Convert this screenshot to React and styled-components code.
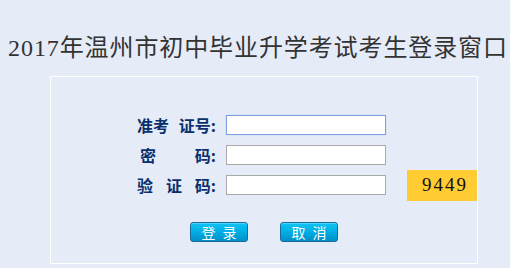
import React from "react";
import styled, { createGlobalStyle } from "styled-components";

const Global = createGlobalStyle`
  html, body { margin: 0; padding: 0; background: #e5ebf7; }
  body { width: 510px; height: 268px; overflow: hidden; }
`;

const Page = styled.div`
  width: 510px;
  height: 268px;
  background: #e5ebf7;
  display: flex;
  flex-direction: column;
`;

const Title = styled.h1`
  margin: 33px 0 0 0;
  padding-left: 6px;
  height: 30px;
  line-height: 30px;
  text-align: center;
  font-family: "Liberation Serif", "Noto Sans CJK SC", serif;
  font-weight: 400;
  font-size: 24px;
  letter-spacing: 0.9px;
  color: #333333;
  white-space: nowrap;
`;

const Panel = styled.div`
  margin: 13px 0 0 50px;
  width: 428px;
  height: 188px;
  border: 1px solid #ffffff;
  box-sizing: border-box;
  display: flex;
  flex-direction: column;
  padding-top: 38px;
`;

const Rows = styled.div`
  display: flex;
  flex-direction: column;
  gap: 10px;
  padding-left: 86px;
`;

const Row = styled.div`
  display: flex;
  align-items: center;
  height: 20px;
`;

const Label = styled.div`
  width: 79px;
  margin-right: 10px;
  display: flex;
  justify-content: space-between;
  padding-left: ${(p) => p.$indent || 0}px;
  box-sizing: border-box;
  font-family: "Noto Sans CJK SC", sans-serif;
  font-weight: 700;
  font-size: 16px;
  line-height: 20px;
  color: #0b2f6b;
  white-space: nowrap;
`;

const Field = styled.input`
  width: 160px;
  height: 20px;
  box-sizing: border-box;
  margin: 0;
  padding: 0 3px;
  background: #ffffff;
  border: 1px solid ${(p) => (p.$active ? "#7b9fe2" : "#a9a9a9")};
  box-shadow: ${(p) => (p.$active ? "0 0 1px 0 #a9c3f0" : "none")};
  outline: none;
  font-size: 13px;
`;

const Captcha = styled.div`
  margin-left: 21px;
  width: 70px;
  height: 31px;
  flex-shrink: 0;
  background: #ffcc33;
  display: flex;
  align-items: center;
  padding-left: 15px;
  box-sizing: border-box;
  font-family: "Liberation Serif", serif;
  font-size: 19px;
  letter-spacing: 2px;
  color: #111111;
`;

const Buttons = styled.div`
  display: flex;
  gap: 32px;
  margin-top: 27px;
  padding-left: 139px;
`;

const Button = styled.button`
  width: 58px;
  height: 20px;
  margin: 0;
  padding: 0;
  box-sizing: border-box;
  border: 1px solid #1a6a9c;
  border-radius: 3px;
  background: linear-gradient(to bottom, #12c4f4 0%, #00b0e6 45%, #0090c8 100%);
  box-shadow: inset 0 1px 0 rgba(255, 255, 255, 0.25);
  color: #ffffff;
  font-family: "Noto Sans CJK SC", sans-serif;
  font-size: 14px;
  line-height: 18px;
  letter-spacing: 2px;
  text-indent: 2px;
  cursor: pointer;
`;

export default function App() {
  return (
    <Page>
      <Global />
      <Title>2017年温州市初中毕业升学考试考生登录窗口</Title>
      <Panel>
        <Rows>
          <Row>
            <Label>
              <span>准考</span>
              <span>证号:</span>
            </Label>
            <Field $active type="text" />
          </Row>
          <Row>
            <Label $indent={3}>
              <span>密</span>
              <span>码:</span>
            </Label>
            <Field type="password" />
          </Row>
          <Row>
            <Label>
              <span>验</span>
              <span>证</span>
              <span>码:</span>
            </Label>
            <Field type="text" />
            <Captcha>9449</Captcha>
          </Row>
        </Rows>
        <Buttons>
          <Button>登 录</Button>
          <Button>取 消</Button>
        </Buttons>
      </Panel>
    </Page>
  );
}
